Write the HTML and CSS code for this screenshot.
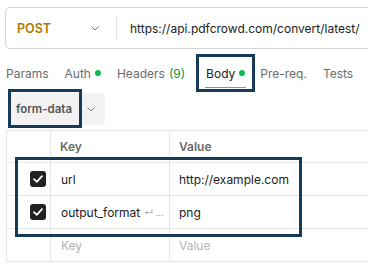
FILE: index.html
```html
<!DOCTYPE html>
<html lang="en">
<head>
    <meta charset="UTF-8">
    <meta name="viewport" content="width=device-width, initial-scale=1.0">
    <title>Request Body</title>
    <link rel="stylesheet" href="styles.css">
</head>
<body>
    <div class="url-bar">
        <div class="method">
            <span>POST</span>
            <svg class="chevron" width="8" height="5" viewBox="0 0 8 5"><path d="M0.5 0.5 L4 4 L7.5 0.5" fill="none" stroke="#777" stroke-width="1"/></svg>
        </div>
        <div class="divider"></div>
        <div class="url">https://api.pdfcrowd.com/convert/latest/</div>
    </div>

    <div class="tabs">
        <span class="tab">Params</span>
        <span class="tab">Auth <i class="dot"></i></span>
        <span class="tab">Headers <span class="count">(9)</span></span>
        <span class="tab active"><span class="tab-text">Body <i class="dot"></i></span></span>
        <span class="tab">Pre-req.</span>
        <span class="tab">Tests</span>
    </div>

    <div class="body-type">
        <span class="type-label">form-data</span>
        <svg class="chevron" width="8" height="5" viewBox="0 0 8 5"><path d="M0.5 0.5 L4 4 L7.5 0.5" fill="none" stroke="#777" stroke-width="1"/></svg>
    </div>

    <div class="params">
        <div class="row head">
            <div class="cell check"></div>
            <div class="cell key">Key</div>
            <div class="cell value">Value</div>
        </div>
        <div class="marked">
            <div class="row">
                <div class="cell check"><span class="box"><svg width="10" height="8" viewBox="0 0 10 8"><path d="M1 4.2 L3.8 6.8 L9 1.2" fill="none" stroke="#fff" stroke-width="1.8" stroke-linecap="round" stroke-linejoin="round"/></svg></span></div>
                <div class="cell key">url</div>
                <div class="cell value">http://example.com</div>
            </div>
            <div class="row">
                <div class="cell check"><span class="box"><svg width="10" height="8" viewBox="0 0 10 8"><path d="M1 4.2 L3.8 6.8 L9 1.2" fill="none" stroke="#fff" stroke-width="1.8" stroke-linecap="round" stroke-linejoin="round"/></svg></span></div>
                <div class="cell key">output_format <span class="more">&#8629; ...</span></div>
                <div class="cell value">png</div>
            </div>
        </div>
        <div class="row empty">
            <div class="cell check"></div>
            <div class="cell key">Key</div>
            <div class="cell value">Value</div>
        </div>
    </div>
</body>
</html>
```

FILE: styles.css
```css
body {
    margin: 0;
    font-family: Inter, "Noto Sans", sans-serif;
    color: #212121;
    background-color: #ffffff;
    overflow: hidden;
    width: 368px;
    height: 269px;
}
.url-bar {
    display: flex;
    align-items: center;
    box-sizing: border-box;
    width: 420px;
    height: 42px;
    margin: 7px 0 0 5px;
    border: 1px solid #d6d6d6;
    border-radius: 5px;
}
.method {
    display: flex;
    align-items: center;
    justify-content: space-between;
    box-sizing: border-box;
    width: 110px;
    padding: 0 17px 0 11px;
    color: #ad7a03;
    font-size: 12.5px;
    font-weight: 600;
}
.divider {
    width: 1px;
    height: 25px;
    background-color: #e6e6e6;
}
.url {
    padding-left: 13px;
    font-size: 12px;
    white-space: nowrap;
}
.tabs {
    display: flex;
    align-items: center;
    gap: 16px;
    height: 32px;
    margin: 8px 0 0 6px;
    font-size: 12px;
    color: #6b6b6b;
}
.tab {
    display: flex;
    align-items: center;
    gap: 4px;
    white-space: nowrap;
}
.tab.active {
    position: relative;
    box-sizing: border-box;
    height: 32px;
    padding: 0 7px;
    margin: 0 -8px 0 -2px;
    color: #212121;
    outline: 3px solid #173a58;
}
.tab-text {
    display: flex;
    align-items: center;
    gap: 4px;
}
.tab.active::after {
    content: "";
    position: absolute;
    left: 6px;
    right: 6px;
    bottom: 1px;
    height: 1px;
    background-color: #ff6c37;
}
.dot {
    display: inline-block;
    width: 6px;
    height: 6px;
    border-radius: 50%;
    background-color: #0cbb52;
}
.count {
    color: #0a8f42;
}
.body-type {
    display: flex;
    align-items: center;
    width: 97px;
    height: 32px;
    margin: 4px 0 0 8px;
    background-color: #f2f2f2;
    border-radius: 4px;
}
.type-label {
    position: relative;
    box-sizing: border-box;
    width: 74px;
    padding-left: 8px;
    font-size: 11.5px;
    font-weight: 600;
    color: #555555;
}
.type-label::after {
    content: "";
    position: absolute;
    left: 0;
    top: -13px;
    width: 74px;
    height: 39px;
    box-sizing: border-box;
    border: 3px solid #173a58;
}
.body-type .chevron {
    margin-left: 5px;
}
.params {
    margin: 5px 0 0 6px;
    width: 420px;
    border-left: 1px solid #e6e6e6;
    border-top: 1px solid #e6e6e6;
}
.row {
    display: flex;
    height: 33px;
    border-bottom: 1px solid #e6e6e6;
    box-sizing: border-box;
}
.row.head {
    height: 32px;
}
.cell {
    display: flex;
    align-items: center;
    font-size: 12px;
    white-space: nowrap;
}
.check {
    width: 44px;
    justify-content: flex-end;
    border-right: 1px solid #e6e6e6;
    padding-right: 4px;
    box-sizing: border-box;
}
.key {
    width: 119px;
    padding-left: 10px;
    box-sizing: border-box;
    border-right: 1px solid #e6e6e6;
}
.value {
    padding-left: 9px;
}
.head .cell {
    font-weight: 600;
    color: #6b6b6b;
    padding-left: 9px;
}
.head .check {
    padding-left: 0;
}
.empty .cell {
    color: #b3b3b3;
}
.box {
    display: flex;
    align-items: center;
    justify-content: center;
    width: 16px;
    height: 16px;
    border-radius: 3px;
    background-color: #212121;
}
.more {
    margin-left: 4px;
    font-size: 9px;
    color: #a6a6a6;
}
.marked {
    position: relative;
}
.marked::after {
    content: "";
    position: absolute;
    left: 8px;
    top: -6px;
    width: 287px;
    height: 80px;
    box-sizing: border-box;
    border: 3px solid #173a58;
    pointer-events: none;
}
```
